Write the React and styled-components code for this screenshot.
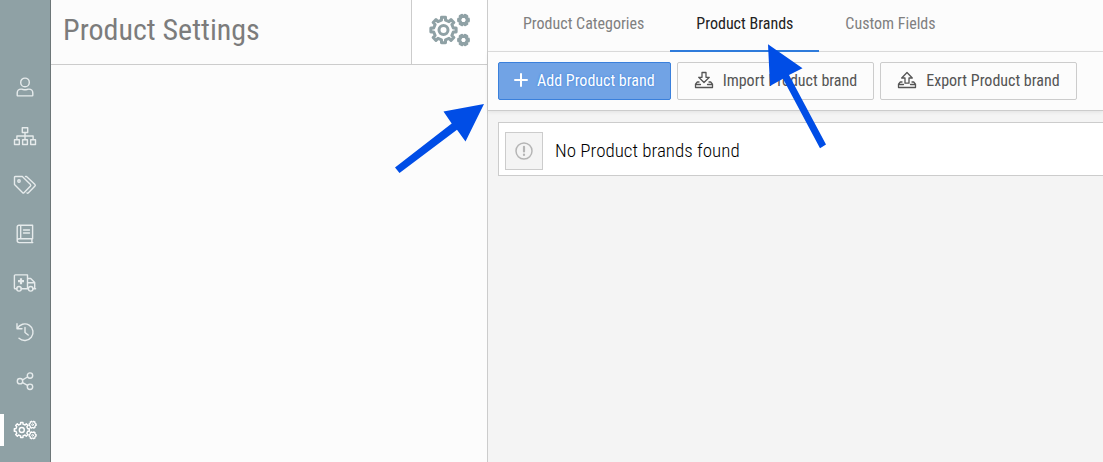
import React from "react";
import styled, { createGlobalStyle } from "styled-components";

const GlobalStyle = createGlobalStyle`
  * {
    box-sizing: border-box;
  }
  body {
    margin: 0;
    background: #f4f4f4;
    color: #111;
    font-family: "Roboto Condensed", "Liberation Sans Narrow", "Roboto", sans-serif;
    font-size: 16px;
    font-weight: 400;
  }
`;

const Page = styled.div`
  position: relative;
  display: flex;
  min-height: 100vh;
  overflow: hidden;
`;

const Sidebar = styled.nav`
  flex: none;
  display: flex;
  flex-direction: column;
  width: 51px;
  padding-top: 62px;
  background: #8fa1a5;
  border-right: 1px solid #6d7678;
`;

const SideLink = styled.a`
  display: flex;
  align-items: center;
  height: 49px;
  padding-left: 9px;
  color: ${(p) => (p.$active ? "#fff" : "#e6ebec")};
  &::before {
    content: "";
    width: 4px;
    height: 32px;
    margin-left: -9px;
    margin-right: 9px;
    background: ${(p) => (p.$active ? "#fff" : "transparent")};
  }
`;

const Panel = styled.aside`
  flex: none;
  width: 437px;
  background: #fcfcfc;
  border-right: 1px solid #ccc;
`;

const PanelHeader = styled.header`
  display: flex;
  height: 65px;
  border-bottom: 1px solid #ccc;
`;

const Title = styled.h1`
  flex: 1;
  margin: 0;
  padding-left: 12px;
  font-size: 30px;
  font-weight: 400;
  line-height: 60px;
  color: #7c7c7c;
`;

const TitleIcon = styled.div`
  display: flex;
  align-items: center;
  justify-content: center;
  width: 76px;
  padding-bottom: 4px;
  border-left: 1px solid #ccc;
  background: #fff;
  color: #8fa1a5;
`;

const Main = styled.main`
  flex: 1;
  min-width: 0;
`;

const Tabs = styled.nav`
  display: flex;
  height: 52px;
  padding-left: 9px;
  background: #fcfcfc;
  border-bottom: 1px solid #ddd;
`;

const Tab = styled.a`
  height: 52px;
  padding: 0 26px;
  line-height: 48px;
  text-decoration: none;
  white-space: nowrap;
  color: ${(p) => (p.$active ? "#222" : "#808080")};
  border-bottom: 2px solid ${(p) => (p.$active ? "#2f7bdb" : "transparent")};
`;

const Toolbar = styled.div`
  display: flex;
  gap: 6px;
  padding: 10px 10px;
  background: #fcfcfc;
  border-bottom: 1px solid #ccc;
  box-shadow: 0 1px 4px rgba(0, 0, 0, 0.08);
`;

const Button = styled.button`
  display: flex;
  align-items: center;
  gap: 9px;
  height: 38px;
  padding: 0 ${(p) => (p.$primary ? 15 : 16)}px 2px;
  border: 1px solid ${(p) => (p.$primary ? "#3a80dc" : "#ccc")};
  border-radius: 2px;
  background: ${(p) => (p.$primary ? "#71a3e5" : "#fcfcfc")};
  color: ${(p) => (p.$primary ? "#fff" : "#555")};
  text-shadow: ${(p) => (p.$primary ? "0 0 2px #2f7bdb" : "none")};
  font-family: inherit;
  font-size: 16px;
  font-weight: 400;
  white-space: nowrap;
`;

const List = styled.div`
  padding: 11px 0 0 10px;
`;

const Row = styled.div`
  display: flex;
  align-items: center;
  gap: 12px;
  height: 54px;
  padding: 3px 6px 0;
  border: 1px solid #ccc;
  border-right: none;
  background: #fff;
  color: #000;
  font-size: 19px;
  font-weight: 300;
  line-height: 24px;
`;

const RowIcon = styled.div`
  display: flex;
  align-items: center;
  justify-content: center;
  width: 38px;
  height: 38px;
  border: 1px solid #ccc;
  background: #f4f4f4;
  color: #b5b5b5;
`;

const Arrows = styled.svg`
  position: absolute;
  top: 0;
  left: 0;
  pointer-events: none;
`;

function Icon({ w = 24, h = 20, stroke = 1.4, children }) {
  return (
    <svg
      width={w}
      height={h}
      viewBox={`0 0 ${w} ${h}`}
      fill="none"
      stroke="currentColor"
      strokeWidth={stroke}
      strokeLinejoin="round"
      strokeLinecap="round"
      aria-hidden="true"
    >
      {children}
    </svg>
  );
}

// outline of a gear, one tooth every full turn / teeth
function gear(cx, cy, outer, inner, teeth, start = -Math.PI / 2) {
  const step = (Math.PI * 2) / teeth;
  const points = [];
  for (let i = 0; i < teeth; i++) {
    [
      [-0.26, inner],
      [-0.2, outer],
      [0.2, outer],
      [0.26, inner]
    ].forEach(([t, r]) => {
      const a = start + (i + t) * step;
      points.push(
        `${(cx + r * Math.cos(a)).toFixed(2)} ${(cy + r * Math.sin(a)).toFixed(2)}`
      );
    });
  }
  return `M${points.join("L")}Z`;
}

const links = [
  {
    name: "Customers",
    icon: (
      <>
        <circle cx="12" cy="5.4" r="4.3" />
        <path d="M4.2 18.3v-2.2q0-4 4-4 1.2 0 2 .4 1.8.6 3.6 0 .8-.4 2-.4 4 0 4 4v2.2q0 .6-.6.6H4.8q-.6 0-.6-.6Z" />
      </>
    )
  },
  {
    name: "Structure",
    icon: (
      <path d="M9.3 1.7h5.4v4.8H9.3ZM1.5 13.7h4.8v4.8H1.5ZM9.6 13.7h4.8v4.8H9.6ZM17.7 13.7h4.8v4.8h-4.8ZM12 6.5v7M3.9 13.5V10h16.2v3.5" />
    )
  },
  {
    name: "Products",
    icon: (
      <>
        <path d="M2.3 1.5h7l8.2 8.1q.6.7 0 1.3l-6.5 6.9q-.7.6-1.3 0L1.5 9.5v-7q0-1 .8-1Z" />
        <path d="M12.5 1.5h1l8.5 8.1q.6.7 0 1.3l-6.8 7q-.6.5-1.2.1" />
        <circle cx="6" cy="6" r="1.2" />
      </>
    )
  },
  {
    name: "Catalog",
    icon: (
      <path d="M6 1.2h13.6v13.6H6.2q-2 0-2 1.8V3q0-1.8 1.8-1.8ZM4.2 16.6q0 2 2 2h13.6M18.9 14.8v3.8M7.7 1.2v13.6M10.5 6h6M10.5 9h6" />
    )
  },
  {
    name: "Suppliers",
    icon: (
      <>
        <path d="M4 15.7H2.2q-.8 0-.8-.8V2.8q0-.9.9-.9h12.2v13.8H8M14.5 5.5h3.2l4 4v6.2M14.5 9.8h7M14.5 15.7h.8M19.8 15.7h2.8" />
        <circle cx="6" cy="15.8" r="2.3" />
        <circle cx="17.7" cy="15.8" r="2.3" />
        <path d="M8 5.2v6M5 8.2h6" strokeWidth="2.2" strokeLinecap="butt" />
      </>
    )
  },
  {
    name: "History",
    icon: (
      <path d="M4 1.8v5h5M4.3 6.5A8.3 8.3 0 1 1 6 16.2M12 5.5v5l3.2 2.5" />
    )
  },
  {
    name: "Share",
    icon: (
      <>
        <circle cx="7" cy="10.2" r="2.7" />
        <circle cx="17" cy="4.6" r="2.7" />
        <circle cx="17" cy="15.8" r="2.7" />
        <path d="M9.6 8.8l4.9-2.8M9.6 11.7l4.9 2.7" />
      </>
    )
  },
  {
    name: "Settings",
    active: true,
    icon: (
      <>
        <path d={gear(8.8, 10, 7.6, 6, 8)} />
        <circle cx="8.8" cy="10" r="2.5" />
        <path d={gear(19.6, 4.7, 3.6, 3, 6, 0)} strokeWidth="1.3" />
        <circle cx="19.6" cy="4.7" r=".9" strokeWidth="1" />
        <path d={gear(19.6, 15.3, 3.6, 3, 6, 0)} strokeWidth="1.3" />
        <circle cx="19.6" cy="15.3" r=".9" strokeWidth="1" />
      </>
    )
  }
];

function Tray({ children }) {
  return (
    <Icon w={20} h={18} stroke={1.3}>
      <path d="M5 11H3.3L1.5 13.2v3.3h17v-3.3L16.7 11H15M1.5 13.5h5M13.5 13.5h5" />
      {children}
    </Icon>
  );
}

function App() {
  return (
    <Page>
      <GlobalStyle />
      <Sidebar>
        {links.map((link) => (
          <SideLink
            key={link.name}
            href="#"
            aria-label={link.name}
            $active={link.active}
          >
            <Icon>{link.icon}</Icon>
          </SideLink>
        ))}
      </Sidebar>

      <Panel>
        <PanelHeader>
          <Title>Product Settings</Title>
          <TitleIcon>
            <Icon w={42} h={36} stroke={3}>
              <path d={gear(14.5, 18, 12.8, 10, 8)} />
              <circle cx="14.5" cy="18" r="4.5" />
              <path d={gear(34.5, 8, 5, 3.6, 6, 0)} />
              <path d={gear(34.5, 28, 5, 3.6, 6, 0)} />
            </Icon>
          </TitleIcon>
        </PanelHeader>
      </Panel>

      <Main>
        <Tabs>
          <Tab href="#">Product Categories</Tab>
          <Tab href="#" $active>
            Product Brands
          </Tab>
          <Tab href="#">Custom Fields</Tab>
        </Tabs>
        <Toolbar>
          <Button type="button" $primary>
            <Icon w={14} h={14} stroke={2}>
              <path d="M7 1v12M1 7h12" />
            </Icon>
            Add Product brand
          </Button>
          <Button type="button">
            <Tray>
              <path d="M8 1.5h4v4.8h3.3L10 11.5 4.7 6.3H8Z" />
            </Tray>
            Import Product brand
          </Button>
          <Button type="button">
            <Tray>
              <path d="M8 12.2h4V7h3.3L10 1.5 4.7 7H8Z" />
            </Tray>
            Export Product brand
          </Button>
        </Toolbar>
        <List>
          <Row>
            <RowIcon>
              <Icon w={18} h={18} stroke={1.5}>
                <circle cx="9" cy="9" r="8" />
                <path d="M9 4.8v4.7M9 12.6v.4" strokeWidth="2.2" />
              </Icon>
            </RowIcon>
            No Product brands found
          </Row>
        </List>
      </Main>

      <Arrows width="900" height="200" fill="#004de6" aria-hidden="true">
        <path d="M484 104 465.5 141.5 457 129.7 399.5 173 395 167.5 451.7 123.5 443.5 111.5Z" />
        <path d="M768 44.3 802.5 68.3 789 75 826 144.5 820 148.3 783 78.7 770 86Z" />
      </Arrows>
    </Page>
  );
}

export default App;
